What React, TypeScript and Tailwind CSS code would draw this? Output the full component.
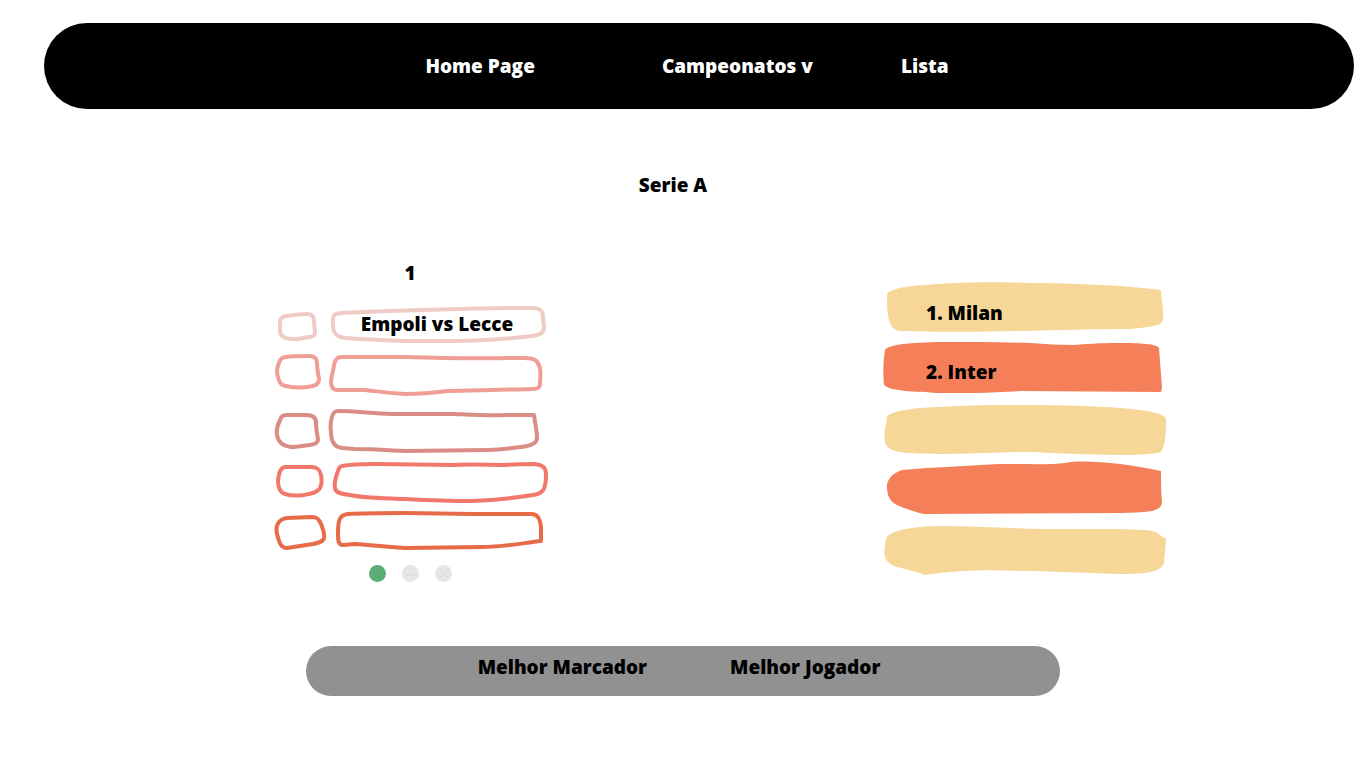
import { useState } from "react";

type Shape = { view: string; d: string };

const fixtures: {
  match: string;
  stroke: string;
  height: string;
  box: Shape;
  bar: Shape;
}[] = [
  {
    match: "Empoli vs Lecce",
    stroke: "#efcbc6",
    height: "h-[47px]",
    box: {
      view: "274 302 54 47",
      d: "M287 316C294 315 301 314 307 314C312 314 314 317 314 321C314 326 315 330 315 333C315 336 312 337 308 337C300 339 291 340 286 338C281 337 280 334 280 330L280 322C280 318 283 316 287 316Z",
    },
    bar: {
      view: "328 302 222 47",
      d: "M341 313C380 311 420 310 460 309C490 308 512 308 531 308C541 308 543 311 543 318L544 327C544 333 540 335 532 336C505 339 480 341 455 341L405 341C380 340 362 339 345 338C336 337 333 333 333 325C332 316 334 313 341 313Z",
    },
  },
  {
    match: "",
    stroke: "#f09e95",
    height: "h-[53px]",
    box: {
      view: "274 349 54 53",
      d: "M286 357C292 356 300 356 309 356C315 356 317 359 317 363C317 368 318 373 319 379C319 383 317 385 313 386C304 388 294 388 286 386C280 385 279 381 278 377C276 371 277 367 279 363C280 359 282 357 286 357Z",
    },
    bar: {
      view: "328 349 222 53",
      d: "M341 357L405 357C445 358 480 359 505 358L524 358C537 358 538 362 540 368C541 374 540 379 540 384C540 388 537 389 533 389C500 390 470 390 448 391C432 393 418 394 405 394C385 393 375 391 365 390L338 390C333 390 331 387 331 382C331 376 334 370 334 365C335 360 337 357 341 357Z",
    },
  },
  {
    match: "",
    stroke: "#d98d85",
    height: "h-[54px]",
    box: {
      view: "274 402 54 54",
      d: "M286 415L307 415C313 415 316 418 316 423C316 429 317 434 318 439C318 443 315 444 310 445C302 446 297 447 291 447C282 446 278 441 277 435C276 429 278 424 280 420C281 417 283 415 286 415Z",
    },
    bar: {
      view: "328 402 222 54",
      d: "M338 411C352 411 370 413 392 414C415 414 435 414 455 414C475 415 490 416 505 415L534 415C535 423 537 431 537 438C537 444 530 446 521 447C510 448 502 450 488 450L405 451C385 450 370 449 355 449L342 448C334 447 331 441 331 432C330 425 331 420 332 417C333 413 335 411 338 411Z",
    },
  },
  {
    match: "",
    stroke: "#f3786c",
    height: "h-[51px]",
    box: {
      view: "274 456 54 51",
      d: "M286 467L311 467C318 467 320 470 321 475C322 480 322 484 320 488C317 493 310 494 304 495C297 496 291 496 285 494C279 492 278 486 278 481C279 471 281 467 286 467Z",
    },
    bar: {
      view: "328 456 222 51",
      d: "M342 466C352 464 362 464 375 464L455 465C470 464 490 465 505 465C515 464 525 464 534 464C544 465 546 468 546 475C546 489 543 494 533 495C515 498 495 500 472 501C445 501 425 500 405 499C380 498 362 498 350 495C342 494 335 493 335 488C334 482 336 476 338 471C339 468 340 466 342 466Z",
    },
  },
  {
    match: "",
    stroke: "#e76b48",
    height: "h-[48px]",
    box: {
      view: "274 507 54 48",
      d: "M287 518L312 517C317 517 319 519 321 524C323 529 325 533 324 538C323 542 318 543 313 544L287 548C280 548 279 541 277 534C275 525 279 519 287 518Z",
    },
    bar: {
      view: "328 507 222 48",
      d: "M348 514C365 513 385 513 405 513L472 514L531 514C538 514 540 519 541 527L541 541C523 543 503 547 482 547L405 548C385 547 370 545 355 544L343 545C338 545 338 540 338 533C338 519 340 515 348 514Z",
    },
  },
];

const standings: { team: string; fill: string; height: string; shape: Shape }[] = [
  {
    team: "1. Milan",
    fill: "#f6d797",
    height: "h-[57px]",
    shape: {
      view: "882 280 286 57",
      d: "M887 294C891 288 908 286 937 284C970 282 1000 282 1030 283C1070 283 1120 285 1161 290C1161 299 1164 309 1163 317C1163 325 1160 326 1130 329C1095 329 1060 330 1020 331C980 332 930 332 900 331C889 330 887 318 887 294Z",
    },
  },
  {
    team: "2. Inter",
    fill: "#f47f58",
    height: "h-[62px]",
    shape: {
      view: "882 337 286 62",
      d: "M885 350C889 345 903 343 937 342C970 342 1000 342 1030 343C1045 344 1060 345 1073 345C1085 344 1100 343 1118 343C1135 343 1155 343 1159 348L1162 388L1161 392L1020 391C990 393 960 393 937 393C915 391 892 392 884 385C883 373 883 362 885 350Z",
    },
  },
  {
    team: "",
    fill: "#f6d797",
    height: "h-[59px]",
    shape: {
      view: "882 399 286 59",
      d: "M887 416C895 410 915 408 937 407C970 405 1000 405 1030 405C1060 405 1095 406 1120 408C1145 410 1165 413 1166 419C1166 432 1166 444 1161 452C1155 454 1145 454 1130 455C1100 455 1065 454 1035 452L1020 452C990 453 960 454 937 454C915 453 885 455 885 441C883 433 887 423 887 416Z",
    },
  },
  {
    team: "",
    fill: "#f47f58",
    height: "h-[60px]",
    shape: {
      view: "882 458 286 60",
      d: "M902 470C935 467 968 466 1000 464C1025 464 1052 465 1065 463C1080 460 1100 462 1120 464C1135 466 1148 468 1161 471C1161 482 1161 492 1162 502C1161 512 1150 512 1120 513L923 514C912 511 903 508 895 504C888 499 887 493 887 485C888 478 893 473 902 470Z",
    },
  },
  {
    team: "",
    fill: "#f6d797",
    height: "h-[60px]",
    shape: {
      view: "882 518 286 60",
      d: "M886 539C888 532 905 527 937 526C970 526 1005 528 1043 529C1070 529 1095 529 1120 529C1135 530 1152 529 1157 533L1166 539L1164 563C1160 573 1145 574 1117 574C1085 573 1050 571 1020 571C985 569 950 571 925 575C917 572 907 569 897 567C881 562 884 552 886 539Z",
    },
  },
];

const dotMarks = [
  { d: "M6 11L11 6", stroke: "#55a670" },
  { d: "M3 8l2 3 2-3 1 3 2-2 1 2 3-3", stroke: "#d9d9d9" },
  { d: "M4 4L13 13M13 4L4 13", stroke: "#d9d9d9" },
];

function Outline({ shape, stroke }: { shape: Shape; stroke: string }) {
  return (
    <svg viewBox={shape.view} className="col-start-1 row-start-1 h-full w-full" aria-hidden="true">
      <path d={shape.d} fill="none" stroke={stroke} strokeWidth="4" strokeLinejoin="round" />
    </svg>
  );
}

function Header() {
  return (
    <header className="mt-[23px] mr-3 ml-11 flex h-[86px] items-center justify-center rounded-full bg-black pr-6 text-white">
      <nav className="flex items-center">
        <a href="#home">Home Page</a>
        <button type="button" className="ml-[127px]">
          Campeonatos v
        </button>
        <a href="#lista" className="ml-[88px]">
          Lista
        </a>
      </nav>
    </header>
  );
}

function Fixtures() {
  const [page, setPage] = useState(0);
  return (
    <section className="flex w-[276px] flex-col">
      <h2 className="mb-[17px] pr-1 text-center">1</h2>
      <ul>
        {fixtures.map((f, i) => (
          <li key={i} className={`flex ${f.height}`}>
            <div className="grid w-[54px]">
              <Outline shape={f.box} stroke={f.stroke} />
            </div>
            <div className="grid flex-1 items-center">
              <Outline shape={f.bar} stroke={f.stroke} />
              <span className="col-start-1 row-start-1 pr-1 pb-1 text-center">{f.match}</span>
            </div>
          </li>
        ))}
      </ul>
      <div className="mt-[10px] flex justify-center gap-4 pr-1">
        {dotMarks.map((mark, n) => (
          <button
            key={n}
            type="button"
            aria-label={`Jornada ${n + 1}`}
            onClick={() => setPage(n)}
            className={`size-[17px] rounded-full ${n === page ? "bg-[#5bae76]" : "bg-[#e6e6e6]"}`}
          >
            <svg viewBox="0 0 17 17" className="size-full" aria-hidden="true">
              <path d={mark.d} fill="none" stroke={mark.stroke} strokeWidth="1" />
            </svg>
          </button>
        ))}
      </div>
    </section>
  );
}

function Standings() {
  return (
    <ol className="mt-[19px] w-[286px]">
      {standings.map((s, i) => (
        <li key={i} className={`grid items-center ${s.height}`}>
          <svg viewBox={s.shape.view} className="col-start-1 row-start-1 h-full w-full" aria-hidden="true">
            <path d={s.shape.d} fill={s.fill} />
          </svg>
          <span className="col-start-1 row-start-1 pt-2 pl-11">{s.team}</span>
        </li>
      ))}
    </ol>
  );
}

export default function App() {
  return (
    <div className="flow-root min-h-screen bg-white font-['Open_Sans',sans-serif] text-[19px] leading-6 font-extrabold text-black">
      <Header />
      <h1 className="mt-16 pr-5 text-center">Serie A</h1>
      <main className="mt-16 flex items-start justify-between pr-[198px] pl-[274px]">
        <Fixtures />
        <Standings />
      </main>
      <footer className="mx-auto mt-16 flex h-[50px] w-[754px] items-center justify-center gap-[83px] rounded-full bg-[#919191] pr-2 pb-2">
        <a href="#marcador">Melhor Marcador</a>
        <a href="#jogador">Melhor Jogador</a>
      </footer>
    </div>
  );
}
